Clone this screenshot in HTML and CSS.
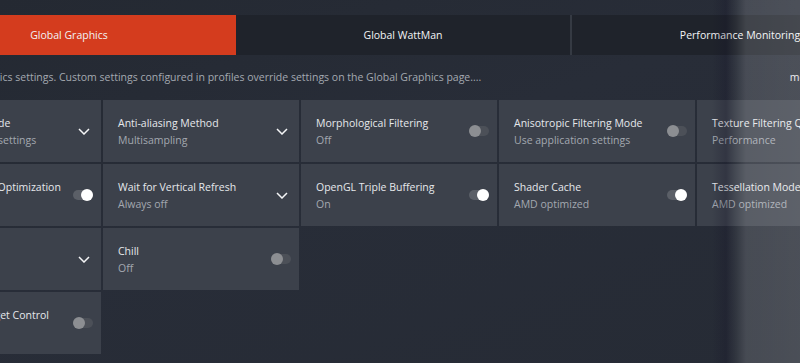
FILE: index.html
```html
<!DOCTYPE html>
<html lang="en">
<head>
  <meta charset="UTF-8">
  <meta name="viewport" content="width=device-width, initial-scale=1">
  <title>Global Settings</title>
  <link rel="stylesheet" href="styles.css">
</head>
<body>

  <div class="page">
    <div class="tabs">
      <div class="tab active">Global Graphics</div>
      <div class="tab">Global WattMan</div>
      <div class="tab">Performance Monitoring</div>
    </div>

    <div class="desc">
      <span class="desc-text">Global Graphics settings. Custom settings configured in profiles override settings on the Global Graphics page....</span>
      <span class="more">more</span>
    </div>

    <div class="grid">
      <div class="tile">
        <div class="info"><div class="name">Anti-aliasing Mode</div><div class="value">Use application settings</div></div>
        <svg class="chevron" width="12" height="7" viewBox="0 0 12 7"><polyline points="1,1 6,6 11,1" /></svg>
      </div>
      <div class="tile">
        <div class="info"><div class="name">Anti-aliasing Method</div><div class="value">Multisampling</div></div>
        <svg class="chevron" width="12" height="7" viewBox="0 0 12 7"><polyline points="1,1 6,6 11,1" /></svg>
      </div>
      <div class="tile">
        <div class="info"><div class="name">Morphological Filtering</div><div class="value">Off</div></div>
        <div class="toggle"></div>
      </div>
      <div class="tile">
        <div class="info"><div class="name">Anisotropic Filtering Mode</div><div class="value">Use application settings</div></div>
        <div class="toggle"></div>
      </div>
      <div class="tile">
        <div class="info"><div class="name">Texture Filtering Quality</div><div class="value">Performance</div></div>
        <svg class="chevron" width="12" height="7" viewBox="0 0 12 7"><polyline points="1,1 6,6 11,1" /></svg>
      </div>

      <div class="tile">
        <div class="info"><div class="name">Surface Format Optimization</div><div class="value">On</div></div>
        <div class="toggle on"></div>
      </div>
      <div class="tile">
        <div class="info"><div class="name">Wait for Vertical Refresh</div><div class="value">Always off</div></div>
        <svg class="chevron" width="12" height="7" viewBox="0 0 12 7"><polyline points="1,1 6,6 11,1" /></svg>
      </div>
      <div class="tile">
        <div class="info"><div class="name">OpenGL Triple Buffering</div><div class="value">On</div></div>
        <div class="toggle on"></div>
      </div>
      <div class="tile">
        <div class="info"><div class="name">Shader Cache</div><div class="value">AMD optimized</div></div>
        <div class="toggle on"></div>
      </div>
      <div class="tile">
        <div class="info"><div class="name">Tessellation Mode</div><div class="value">AMD optimized</div></div>
        <svg class="chevron" width="12" height="7" viewBox="0 0 12 7"><polyline points="1,1 6,6 11,1" /></svg>
      </div>

      <div class="tile">
        <div class="info"><div class="name">GPU Workload</div><div class="value">Graphics</div></div>
        <svg class="chevron" width="12" height="7" viewBox="0 0 12 7"><polyline points="1,1 6,6 11,1" /></svg>
      </div>
      <div class="tile">
        <div class="info"><div class="name">Chill</div><div class="value">Off</div></div>
        <div class="toggle"></div>
      </div>

      <div class="tile row-start">
        <div class="info"><div class="name">Frame Rate Target Control</div></div>
        <div class="toggle"></div>
      </div>
    </div>
  </div>

  <div class="shade"></div>

</body>
</html>
```

FILE: styles.css
```css
* { box-sizing: border-box; }
html, body {
  overflow: hidden;
  height: 100%;
}
body {
  margin: 0;
  font-family: 'Open Sans', 'Noto Sans', sans-serif;
  font-size: 10.5px;
  background: linear-gradient(160deg, #242932 0%, #282d38 45%, #262b35 100%);
  color: #e8eaed;
  position: relative;
}
.page {
  margin-left: -95px;
  width: 1000px;
}
.tabs {
  display: flex;
  margin: 15px 0 0 -3px;
  height: 40px;
}
.tab {
  width: 334px;
  flex-shrink: 0;
  background: #1f232b;
  color: #f2f3f5;
  font-size: 10.5px;
  line-height: 40px;
  text-align: center;
}
.tab.active { background: #d43c1e; }
.tab + .tab { border-right: 2px solid #353a43; width: 336px; }
.tab + .tab + .tab { border-right: none; }
.desc {
  display: flex;
  justify-content: space-between;
  height: 45px;
  line-height: 45px;
  padding: 0 89px 0 30px;
  font-size: 10.5px;
  color: #a4a9b1;
}
.more { color: #e8eaed; }
.grid {
  display: grid;
  grid-template-columns: repeat(5, 196px);
  grid-auto-rows: 62px;
  gap: 2px;
}
.tile {
  background: #3c414b;
  display: flex;
  align-items: center;
  justify-content: space-between;
  padding: 0 8px 0 15px;
}
.row-start { grid-column: 1; }
.info {
  align-self: flex-start;
  padding-top: 15px;
  line-height: 17px;
  white-space: nowrap;
}
.name { color: #e6e8eb; }
.value { color: #a3a8b0; }
.chevron {
  margin-right: 3px;
  fill: none;
  stroke: #f4f5f6;
  stroke-width: 1.5;
}
.toggle {
  position: relative;
  width: 20px;
  height: 10px;
  border-radius: 5px;
  background: #4c5058;
}
.toggle::after {
  content: '';
  position: absolute;
  top: -1px;
  left: 0;
  width: 12px;
  height: 12px;
  border-radius: 50%;
  background: #8c8e92;
}
.toggle.on { background: #5b5f67; }
.toggle.on::after {
  left: auto;
  right: 0;
  background: #fff;
}
.shade {
  position: absolute;
  top: 0;
  bottom: 0;
  left: 712px;
  right: 0;
  pointer-events: none;
  background: linear-gradient(90deg, rgba(20,18,40,0) 0px, rgba(20,18,40,0.25) 14px, rgba(255,255,255,0.05) 24px, rgba(255,255,255,0.15) 34px, rgba(255,255,255,0.17) 88px);
}
```
